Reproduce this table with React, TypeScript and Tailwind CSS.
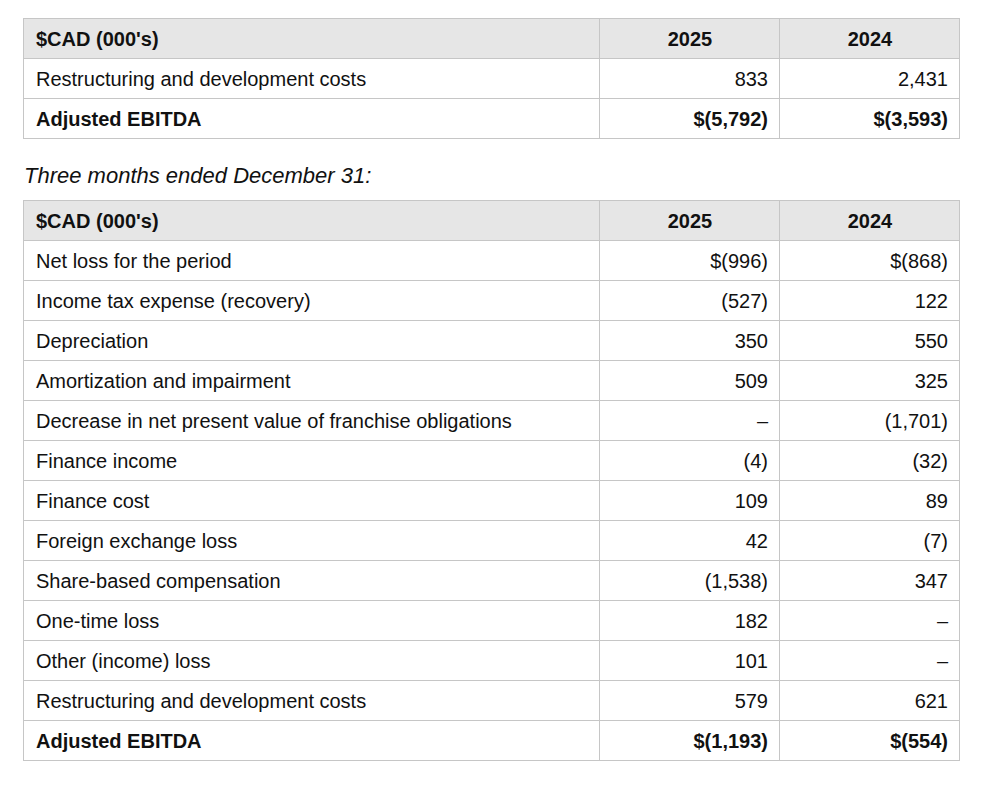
const first = [
  { label: 'Restructuring and development costs', a: '833', b: '2,431' },
]

const second = [
  { label: 'Net loss for the period', a: '$(996)', b: '$(868)' },
  { label: 'Income tax expense (recovery)', a: '(527)', b: '122' },
  { label: 'Depreciation', a: '350', b: '550' },
  { label: 'Amortization and impairment', a: '509', b: '325' },
  { label: 'Decrease in net present value of franchise obligations', a: '–', b: '(1,701)' },
  { label: 'Finance income', a: '(4)', b: '(32)' },
  { label: 'Finance cost', a: '109', b: '89' },
  { label: 'Foreign exchange loss', a: '42', b: '(7)' },
  { label: 'Share-based compensation', a: '(1,538)', b: '347' },
  { label: 'One-time loss', a: '182', b: '–' },
  { label: 'Other (income) loss', a: '101', b: '–' },
  { label: 'Restructuring and development costs', a: '579', b: '621' },
]

function Table({ rows, total }: { rows: { label: string; a: string; b: string }[]; total: { a: string; b: string } }) {
  const cell = 'border border-[#c6c6c6] h-[40px] p-0 pl-3 pr-[11px]'
  return (
    <table className="border-collapse w-[936px] table-fixed text-[20px] text-[#111]">
      <colgroup>
        <col className="w-[576px]" />
        <col className="w-[180px]" />
        <col className="w-[180px]" />
      </colgroup>
      <tbody>
        <tr className="bg-[#e6e6e6] font-bold">
          <td className={cell + ' text-left'}>$CAD (000's)</td>
          <td className={cell + ' text-center'}>2025</td>
          <td className={cell + ' text-center'}>2024</td>
        </tr>
        {rows.map(r => (
          <tr key={r.label}>
            <td className={cell + ' text-left'}>{r.label}</td>
            <td className={cell + ' text-right'}>{r.a}</td>
            <td className={cell + ' text-right'}>{r.b}</td>
          </tr>
        ))}
        <tr className="font-bold">
          <td className={cell + ' text-left'}>Adjusted EBITDA</td>
          <td className={cell + ' text-right'}>{total.a}</td>
          <td className={cell + ' text-right'}>{total.b}</td>
        </tr>
      </tbody>
    </table>
  )
}

export default function App() {
  return (
    <div className="bg-white min-h-screen pt-[18px] pl-[23px] font-['Liberation_Sans',Arial,sans-serif]">
      <Table rows={first} total={{ a: '$(5,792)', b: '$(3,593)' }} />
      <p className="italic text-[22px] text-[#111] pl-px h-[61px] pt-[25px] leading-[24px]">Three months ended December 31:</p>
      <Table rows={second} total={{ a: '$(1,193)', b: '$(554)' }} />
    </div>
  )
}
